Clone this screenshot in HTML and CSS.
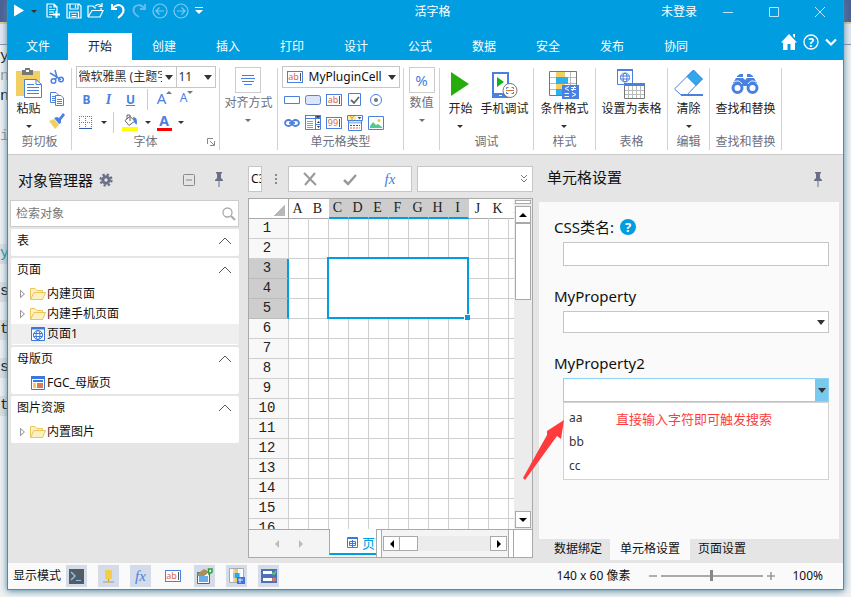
FILE: index.html
```html
<!DOCTYPE html>
<html lang="zh-CN">
<head>
<meta charset="utf-8">
<title>活字格</title>
<link rel="stylesheet" href="styles.css">
</head>
<body>
<div class="backdrop" aria-hidden="true">
  <div class="code-top"><span>y</span><span class="dim">n</span><span>n</span><span></span><span class="dim">i</span></div>
  <div class="code-low"><span class="teal">y</span><span>s</span><span>t</span><span>s</span><span>t</span></div>
</div>
<div class="window">
  <header class="titlebar">
    <div class="quick">
      <button aria-label="运行"><svg width="12" height="16" viewBox="0 0 12 16"><path d="M1 1.500 11 7.500 1 13.500Z" fill="#fff"/></svg></button>
      <button class="q-caret" aria-label="运行选项"><i class="caret"></i></button>
      <button aria-label="新建"><svg width="16" height="16" viewBox="0 0 16 16" fill="none" stroke="#fff" stroke-width="1.200"><path d="M7 14H2V1H9L12 4V8M9 1V4H12M4 4H7M4 6.500H10M4 9H9M4 11.500H8"/><path d="M11.500 8V15M8 11.500H15" stroke-width="2"/></svg></button>
      <button aria-label="保存"><svg width="16" height="16" viewBox="0 0 16 16" fill="none" stroke="#fff" stroke-width="1.200"><path d="M1 1H13L15 3V15H1ZM4 1V6H12V1M9.500 2V5M3.500 15V9H12.500V15M5.500 11.500H10.500M5.500 13.500H10.500"/></svg></button>
      <button aria-label="打开"><svg width="18" height="16" viewBox="0 0 18 16" fill="none" stroke="#fff" stroke-width="1.200"><path d="M1 14V3H6L8 5H9M1 14 5 7.500H16L13 14H1M14 7V5M8 3C10 1 13 1 15 3M15 0V3.500H11.500"/></svg></button>
      <button aria-label="撤销"><svg width="16" height="16" viewBox="0 0 16 16" fill="none" stroke="#fff" stroke-width="2"><path d="M2 1V6H7M2.500 5.500C5 2 9 1 12 3.500C15.500 7 13 11.500 8 15"/></svg></button>
      <button aria-label="重做"><svg width="16" height="16" viewBox="0 0 16 16" fill="none" stroke="#6bb9ec" stroke-width="1.800"><path d="M14 1V6H9M13.500 5.500C11 2 7 1 4 3.500C.5 7 3 11.500 8 14"/></svg></button>
      <button aria-label="后退"><svg width="16" height="16" viewBox="0 0 16 16" fill="none" stroke="#7fc8f0" stroke-width="1.200"><circle cx="8" cy="8" r="7"/><path d="M12 8H4M7.500 4.500 4 8 7.500 11.500"/></svg></button>
      <button aria-label="前进"><svg width="16" height="16" viewBox="0 0 16 16" fill="none" stroke="#7fc8f0" stroke-width="1.200"><circle cx="8" cy="8" r="7"/><path d="M4 8H12M8.500 4.500 12 8 8.500 11.500"/></svg></button>
      <button aria-label="自定义"><svg width="10" height="10" viewBox="0 0 10 10" fill="#fff"><path d="M1 1H9V2H1ZM1 4H9L5 8Z"/></svg></button>
    </div>
    <h1>活字格</h1>
    <div class="sysmenu">
      <button class="login">未登录</button>
      <button aria-label="最小化"><svg width="12" height="12" viewBox="0 0 12 12" stroke="#bfe6fa"><path d="M1 6.500H11"/></svg></button>
      <button aria-label="最大化"><svg width="12" height="12" viewBox="0 0 12 12" fill="none" stroke="#bfe6fa"><path d="M1.500 1.500H10.500V10.500H1.500Z"/></svg></button>
      <button aria-label="关闭"><svg width="12" height="12" viewBox="0 0 12 12" stroke="#bfe6fa"><path d="M1 1 11 11M11 1 1 11"/></svg></button>
    </div>
  </header>

  <nav class="tabs">
    <a class="file" href="#file">文件</a><a class="on" href="#home">开始</a><a href="#create">创建</a><a href="#insert">插入</a><a href="#print">打印</a><a href="#design">设计</a><a href="#formula">公式</a><a href="#data">数据</a><a href="#safe">安全</a><a href="#publish">发布</a><a href="#team">协同</a>
    <div class="tab-tools">
      <button aria-label="主页"><svg width="18" height="18" viewBox="0 0 18 18" fill="#fff"><path d="M9 1 17 9.500H15V17H10.500V11H7.500V17H3V9.500H1ZM13 1H15V5L13 3Z"/></svg></button>
      <button aria-label="帮助"><svg width="18" height="18" viewBox="0 0 18 18"><circle cx="9" cy="9" r="7" fill="none" stroke="#fff" stroke-width="1.300"/><text x="9" y="13.500" text-anchor="middle" font-size="12" font-weight="700" fill="#fff">?</text></svg></button>
      <button aria-label="折叠功能区"><svg width="14" height="18" viewBox="0 0 14 18" fill="none" stroke="#fff" stroke-width="2.200"><path d="M2 6.500 7 11.500 12 6.500"/></svg></button>
    </div>
  </nav>

  <section class="ribbon">
    <div class="group g-clip">
      <div class="body">
        <button class="big"><svg width="28" height="32" viewBox="0 0 28 32"><path d="M1 4H25V29H1Z" fill="#f2cf63"/><path d="M7 3H10V1H15V3H18V8H7Z" fill="#777"/><path d="M11 3H14V5H11Z" fill="#fff"/><path d="M9.500 12.500H21L26.500 17.500V30.500H9.500Z" fill="#fff" stroke="#4a80e0"/><path d="M21 12.500V17.500H26.500M12 17.500H19M12 20.500H24M12 23.500H24M12 26.500H24" fill="none" stroke="#4a80e0"/></svg><span>粘贴</span><i class="caret"></i></button>
        <div class="stack">
          <button aria-label="剪切"><svg width="16" height="16" viewBox="0 0 16 16" fill="none" stroke="#4a80e0" stroke-width="1.500"><path d="M6 1 8 8 12 11M1 4 8 8 6 11"/><circle cx="4.500" cy="12" r="2.300"/><circle cx="12" cy="10.500" r="2.300"/></svg></button>
          <button aria-label="复制"><svg width="16" height="16" viewBox="0 0 16 16" fill="#fff" stroke="#4a80e0"><path d="M1.500 1.500H7L9.500 4V11.500H1.500ZM3 5.500H7M3 7.500H7M3 9.500H7"/><path d="M6.500 4.500H12L14.500 7V14.500H6.500ZM8 8.500H13M8 10.500H13M8 12.500H13"/></svg></button>
          <button aria-label="格式刷"><svg width="16" height="16" viewBox="0 0 16 16"><path d="M0 8 5 6 10 12 6 16Z" fill="#f2cf63"/><path d="M5 5 8 4 10 5 14 0 16 2 12 7 12 10 10 11Z" fill="#4a80e0"/></svg></button>
        </div>
      </div>
      <h2>剪切板</h2>
    </div><i class="sep"></i>
    <div class="group g-font">
      <div class="body col">
        <div class="row joined">
          <label class="pick font-name"><select aria-label="字体"><option>微软雅黑 (主题字体)</option></select></label>
          <label class="pick font-size"><select aria-label="字号"><option>11</option></select></label>
        </div>
        <div class="row text-row">
          <button class="b">B</button><button class="i">I</button><button class="u">U</button><i class="mini-sep"></i>
          <button class="grow" aria-label="增大字号">A<svg width="6" height="6" viewBox="0 0 6 6"><path d="M0 4 3 1 6 4Z" fill="#777"/></svg></button>
          <button class="shrink" aria-label="减小字号">A<svg width="6" height="6" viewBox="0 0 6 6"><path d="M0 1 3 4 6 1Z" fill="#777"/></svg></button>
        </div>
        <div class="row fill-row">
          <button class="borders" aria-label="边框"><svg width="14" height="14" viewBox="0 0 14 14" fill="none" stroke="#777"><path d="M.5 0V13M6.500 0V13M12.500 0V13M0 .5H13M0 6.500H13" stroke-dasharray="1 1"/><path d="M0 12.500H13" stroke="#2f5bb0"/></svg></button><i class="caret"></i><i class="mini-sep"></i>
          <button aria-label="填充颜色"><svg width="17" height="17" viewBox="0 0 17 17"><path d="M3 6.500 8 2.500 13 7 7 11.500Z" fill="#fff" stroke="#666"/><path d="M5 5V1H8V7" fill="none" stroke="#666"/><path d="M11 3C15 3 15.500 7 14.500 11L12 8Z" fill="#4a80e0"/><path d="M0 13H16V17H0Z" fill="#ff0"/></svg></button><i class="caret"></i>
          <button class="color" aria-label="字体颜色">A</button><i class="caret"></i>
        </div>
      </div>
      <h2>字体</h2>
      <button class="launcher" aria-label="字体设置"><svg width="8" height="8" viewBox="0 0 8 8" fill="none" stroke="#888"><path d="M.5 6V.5H6M3 3 7 7M7.500 3V7.500H3"/></svg></button>
    </div><i class="sep"></i>
    <div class="group g-align">
      <button class="boxed"><span class="frame"><svg width="14" height="12" viewBox="0 0 14 12" stroke="#4a80e0"><path d="M1 1.500H13" stroke="#777"/><path d="M0 4.500H14M1 7.500H13M3 10.500H11"/></svg></span><span>对齐方式</span><i class="caret"></i></button>
    </div><i class="sep"></i>
    <div class="group g-cell">
      <div class="body col">
        <label class="pick cell-type"><span class="abl">ab<b></b></span><select aria-label="单元格类型"><option>MyPluginCell</option></select></label>
        <div class="cells">
          <button aria-label="文本"><svg width="16" height="14" viewBox="0 0 16 14"><path d="M.5 3.500H15.500V10.500H.5Z" fill="#fff" stroke="#4a80e0"/></svg></button>
          <button aria-label="按钮"><svg width="16" height="14" viewBox="0 0 16 14"><rect x=".5" y="2.500" width="15" height="9" rx="2" fill="#dbe6fb" stroke="#5e83c4"/></svg></button>
          <button aria-label="文本框"><span class="abl">ab<b></b></span></button>
          <button aria-label="复选框"><svg width="14" height="14" viewBox="0 0 14 14"><path d="M.5 .5H12.500V12.500H.5Z" fill="#fff" stroke="#4a80e0"/><path d="M3 7 6 10 11 4" fill="none" stroke="#666" stroke-width="1.800"/></svg></button>
          <button aria-label="单选"><svg width="14" height="14" viewBox="0 0 14 14"><circle cx="7" cy="7" r="5.500" fill="#fff" stroke="#4a80e0"/><circle cx="7" cy="7" r="2" fill="#777"/></svg></button>
          <button aria-label="超链接"><svg width="16" height="14" viewBox="0 0 16 14" fill="none" stroke="#4a80e0" stroke-width="1.800"><ellipse cx="4.500" cy="7" rx="3.500" ry="3"/><ellipse cx="11.500" cy="7" rx="3.500" ry="3"/><path d="M5 7H11"/></svg></button>
          <button aria-label="列表"><svg width="16" height="16" viewBox="0 0 16 16"><path d="M.5 .5H15.500V14.500H.5Z" fill="#fff" stroke="#4a80e0"/><path d="M0 0H16V4H0Z" fill="#4a80e0"/><path d="M1 1H10V3H1Z" fill="#fff"/><path d="M2 6.500H8M2 8.500H8M2 10.500H8M2 12.500H8" stroke="#999"/><path d="M10.500 4V15M10 9.500H15" stroke="#4a80e0"/><path d="M11 1H15L13 3ZM12 8H15L13.500 6ZM12 11H15L13.500 13Z" fill="#333"/></svg></button>
          <button aria-label="数字"><span class="abl">99<b></b></span></button>
          <button aria-label="日期"><svg width="16" height="16" viewBox="0 0 16 16"><path d="M.5 .5H15.500V5.500H.5Z" fill="#fff" stroke="#4a80e0"/><path d="M1 1H9V5H1Z" fill="#f6e9a8"/><path d="M3 1 5 3 7 1M5 3V5" stroke="#d9a520" fill="none"/><path d="M10.500 2H14.500L12.500 4.500Z" fill="#555"/><path d="M1.500 6V15.500H14.500V6" fill="#fff" stroke="#4a80e0"/><path d="M2 7.500H14" stroke="#9dbcf0" stroke-width="2"/><path d="M3 10.500H13" stroke="#555" stroke-dasharray="2 1"/><path d="M3 13H13" stroke="#e07048" stroke-dasharray="2 1"/></svg></button>
          <button aria-label="图片"><svg width="16" height="16" viewBox="0 0 16 16"><path d="M.5 1.500H15.500V14.500H.5Z" fill="#fff" stroke="#4a80e0"/><path d="M2 13V11L5 7 8 10 10 9 14 12V13Z" fill="#55c795"/><circle cx="11" cy="5.500" r="1.600" fill="#f1c84c"/></svg></button>
        </div>
      </div>
      <h2>单元格类型</h2>
    </div><i class="sep"></i>
    <div class="group g-num">
      <button class="boxed"><span class="frame pct">%</span><span>数值</span><i class="caret"></i></button>
    </div><i class="sep"></i>
    <div class="group g-debug">
      <div class="body">
        <button class="big"><svg width="20" height="32" viewBox="0 0 20 32"><path d="M1 5V29L19 17Z" fill="#27ad0b"/></svg><span>开始</span><i class="caret"></i></button>
        <button class="big"><svg width="26" height="32" viewBox="0 0 26 32"><path d="M1 6H16V29H1Z" fill="#fff" stroke="#4a80e0" stroke-width="2"/><path d="M0 26H17V31H0Z" fill="#4a80e0"/><path d="M7 28.500H10" stroke="#fff"/><path d="M5 10V20L12 15Z" fill="#12b312"/><circle cx="18" cy="23.500" r="7" fill="#fff" stroke="#777"/><path d="M14.500 22V20.500H16.500M19.500 20.500H21.500V22M14.500 25V26.500H16.500M19.500 26.500H21.500V25" fill="none" stroke="#4a80e0"/><path d="M14 23.500H22" stroke="#e07030"/></svg><span>手机调试</span></button>
      </div>
      <h2>调试</h2>
    </div><i class="sep"></i>
    <div class="group g-style">
      <div class="body"><button class="big"><svg width="30" height="32" viewBox="0 0 30 32"><path d="M.5 4.500H27.500V28.500H.5Z" fill="#fff" stroke="#777"/><path d="M7.500 5V28M21.500 5V28M1 10.500H27M1 16.500H27M1 22.500H27" stroke="#bbb"/><path d="M7 5H16V10H7ZM7 17H16V22H7Z" fill="#f2cf63"/><path d="M7 10H19V17H7ZM7 22H13V28H7Z" fill="#2fb0ee"/><path d="M13 18H30V32H13Z" fill="#4a80e0"/><path d="M20 19.500 16 21.500 20 23.500M15.500 26.500H20M15.500 29.500H20M22 20.500H27M22 22.500H27M26 19 23 24M23 25.500 27 27.500 23 29.500" fill="none" stroke="#fff"/></svg><span>条件格式</span><i class="caret"></i></button></div>
      <h2>样式</h2>
    </div><i class="sep"></i>
    <div class="group g-table">
      <div class="body"><button class="big"><svg width="28" height="32" viewBox="0 0 28 32" fill="none"><path d="M.5 2.500H15.500V17.500H.5Z" fill="#fff" stroke="#4a80e0"/><path d="M0 2H16V4H0Z" fill="#4a80e0"/><circle cx="8" cy="10.500" r="4.500" stroke="#4a80e0"/><ellipse cx="8" cy="10.500" rx="2" ry="4.500" stroke="#4a80e0"/><path d="M3.500 9H12.500M3.500 12H12.500" stroke="#4a80e0"/><path d="M7.500 16.500H27.500V31.500H7.500Z" fill="#fff" stroke="#777"/><path d="M7 16H28V19H7Z" fill="#4a80e0"/><path d="M11.500 19V31M15.500 19V31M19.500 19V31M23.500 19V31M8 23.500H27M8 27.500H27" stroke="#bbb"/></svg><span>设置为表格</span></button></div>
      <h2>表格</h2>
    </div><i class="sep"></i>
    <div class="group g-edit">
      <div class="body"><button class="big"><svg width="30" height="32" viewBox="0 0 30 32"><path d="M1 21.500 19 3.500 28 12 13 28H7L1 22.500Z" fill="#fff" stroke="#4a80e0"/><path d="M13 9.500 19.500 3 28.500 12 22 18.500Z" fill="#2fa9ea" stroke="#4a80e0"/><path d="M7 28H29" stroke="#4a80e0" stroke-width="2"/></svg><span>清除</span><i class="caret"></i></button></div>
      <h2>编辑</h2>
    </div><i class="sep"></i>
    <div class="group g-find">
      <div class="body"><button class="big"><svg width="28" height="32" viewBox="0 0 28 32"><g fill="none" stroke="#4a80e0" stroke-width="3"><circle cx="6.500" cy="21" r="4.500"/><circle cx="21.500" cy="21" r="4.500"/></g><path d="M6 9 9 7H12V10H6ZM16 7H19L22 9V10H16ZM5 11H12L14 13 16 11H23L26 16H19L17 19H11L9 16H2Z" fill="#4a80e0"/><path d="M3 15C7 13 9 14 11 17M25 15C21 13 19 14 17 17M4 10.500H24" stroke="#fff" fill="none"/></svg><span>查找和替换</span></button></div>
      <h2>查找和替换</h2>
    </div><i class="sep"></i>
  </section>

  <main class="work">
    <aside class="objects">
      <div class="pane-head">
        <h3>对象管理器</h3>
        <button aria-label="设置"><svg width="14" height="14" viewBox="0 0 14 14" fill="none" stroke="#6b7088"><circle cx="7" cy="7" r="3.200" stroke-width="3"/><circle cx="7" cy="7" r="5.500" stroke-width="2.200" stroke-dasharray="2.300 2.020"/></svg></button>
        <span class="spring"></span>
        <button aria-label="全部折叠"><svg width="14" height="14" viewBox="0 0 14 14" fill="none" stroke="#888"><rect x="1.500" y="1.500" width="11" height="11" rx="1"/><path d="M4 7H10"/></svg></button>
        <button class="pin" aria-label="固定"><svg width="10" height="16" viewBox="0 0 10 16" fill="#6b7088"><path d="M2 0H8V1L7 2V6L9 8V9H1V8L3 6V2L2 1ZM4.500 9H5.500V15H4.500Z"/></svg></button>
      </div>
      <label class="search"><input type="search" aria-label="检索对象" placeholder="检索对象"><svg width="14" height="14" viewBox="0 0 14 14" fill="none" stroke="#aaa"><circle cx="5.500" cy="5.500" r="4.500" stroke-width="1.300"/><path d="M9 9 13 13" stroke-width="2.200"/></svg></label>
      <section class="tree"><button class="tree-head">表<svg width="14" height="8" viewBox="0 0 14 8" fill="none" stroke="#555"><path d="M1 7 7 1 13 7"/></svg></button></section>
      <section class="tree"><button class="tree-head">页面<svg width="14" height="8" viewBox="0 0 14 8" fill="none" stroke="#555"><path d="M1 7 7 1 13 7"/></svg></button>
        <ul>
          <li><i class="tri"></i><svg width="16" height="14" viewBox="0 0 16 14" fill="#fdf0c0" stroke="#ecc65c"><path d="M.5 12.500V1.500H5L7 3.500H12.500V5.500H15.500L12.500 12.500ZM.5 12.500 4 5.500H13"/></svg><a href="#p1">内建页面</a></li>
          <li><i class="tri"></i><svg width="16" height="14" viewBox="0 0 16 14" fill="#fdf0c0" stroke="#ecc65c"><path d="M.5 12.500V1.500H5L7 3.500H12.500V5.500H15.500L12.500 12.500ZM.5 12.500 4 5.500H13"/></svg><a href="#p2">内建手机页面</a></li>
          <li class="on"><i class="tri none"></i><svg width="16" height="14" viewBox="0 0 16 14" fill="none" stroke="#3c78dc"><path d="M1.500 .5H14.500V13.500H1.500Z" fill="#fff"/><path d="M1 1.500H15" stroke-width="2"/><circle cx="8" cy="8" r="4.500"/><ellipse cx="8" cy="8" rx="2" ry="4.500"/><path d="M3.500 6.500H12.500M3.500 9.500H12.500"/></svg><a href="#p3">页面1</a></li>
        </ul></section>
      <section class="tree"><button class="tree-head">母版页<svg width="14" height="8" viewBox="0 0 14 8" fill="none" stroke="#555"><path d="M1 7 7 1 13 7"/></svg></button>
        <ul>
          <li><i class="tri none"></i><svg width="16" height="14" viewBox="0 0 16 14"><path d="M1.500 .5H14.500V13.500H1.500Z" fill="#fff" stroke="#3c78dc"/><path d="M1 0H15V3H1ZM3 4H13V6H3Z" fill="#3c78dc"/><path d="M3 7H6V12H3Z" fill="#f0cc5c"/><path d="M7 7H13V12H7Z" fill="#e07850"/></svg><a href="#m1">FGC_母版页</a></li>
        </ul></section>
      <section class="tree"><button class="tree-head">图片资源<svg width="14" height="8" viewBox="0 0 14 8" fill="none" stroke="#555"><path d="M1 7 7 1 13 7"/></svg></button>
        <ul>
          <li><i class="tri"></i><svg width="16" height="14" viewBox="0 0 16 14" fill="#fdf0c0" stroke="#ecc65c"><path d="M.5 12.500V1.500H5L7 3.500H12.500V5.500H15.500L12.500 12.500ZM.5 12.500 4 5.500H13"/></svg><a href="#i1">内置图片</a></li>
        </ul></section>
    </aside>

    <section class="editor">
      <div class="formula">
        <input class="ref" aria-label="名称框" value="C3">
        <i class="dots"></i>
        <div class="fx-tools">
          <button aria-label="取消"><svg width="14" height="14" viewBox="0 0 14 14" fill="none" stroke="#999" stroke-width="2"><path d="M1 1 13 13M12 1 2 13"/></svg></button>
          <button aria-label="确认"><svg width="14" height="14" viewBox="0 0 14 14" fill="none" stroke="#999" stroke-width="2.500"><path d="M1 8 5 12 13 3"/></svg></button>
          <button class="fx" aria-label="函数">fx</button>
        </div>
        <label class="expr"><input aria-label="公式"><svg width="8" height="8" viewBox="0 0 8 8" fill="none" stroke="#777"><path d="M1 0 4 3 7 0M1 4 4 7 7 4"/></svg></label>
      </div>
      <div class="sheet">
        <div class="view">
          <table id="grid"></table>
          <div class="selection"><i></i></div>
        </div>
        <div class="vscroll"><i class="split"></i><button aria-label="向上"><i class="up"></i></button><i class="thumb"></i><span class="spring"></span><button aria-label="向下"><i class="down"></i></button></div>
        <div class="foot">
          <div class="nav"><button aria-label="上一页"><i class="left"></i></button><button aria-label="下一页"><i class="right"></i></button></div>
          <button class="page-tab"><svg width="11" height="11" viewBox="0 0 11 11" fill="none" stroke="#3c78dc"><path d="M.5 .5H10.500V10.500H.5ZM0 1.500H11M2.500 4.500H8.500V8.500H2.500ZM5.500 3V10M2 6.500H9"/></svg>页面1</button>
          <i class="grip"></i>
          <div class="hscroll"><button aria-label="向左"><i class="left"></i></button><i class="hthumb"></i><span class="spring"></span><button aria-label="向右"><i class="right"></i></button></div>
          <i class="grip"></i>
          <div class="corner"></div>
        </div>
      </div>
    </section>

    <aside class="props">
      <div class="pane-head">
        <h3>单元格设置</h3><span class="spring"></span>
        <button class="pin" aria-label="固定"><svg width="10" height="16" viewBox="0 0 10 16" fill="#6b7088"><path d="M2 0H8V1L7 2V6L9 8V9H1V8L3 6V2L2 1ZM4.500 9H5.500V15H4.500Z"/></svg></button>
      </div>
      <form class="fields">
        <div class="label"><label for="css">CSS类名:</label><span class="q">?</span></div>
        <input id="css" class="box">
        <div class="label"><label for="prop1">MyProperty</label></div>
        <div class="pick box short"><select id="prop1"><option></option></select></div>
        <div class="label"><label for="prop2">MyProperty2</label></div>
        <div class="combo"><input id="prop2" role="combobox" aria-expanded="true" aria-controls="options"><button type="button" aria-label="展开"><i class="caret"></i></button></div>
        <div class="options">
          <ul id="options" role="listbox"><li role="option">aa</li><li role="option">bb</li><li role="option">cc</li></ul>
          <p class="note">直接输入字符即可触发搜索</p>
          <svg class="arrow" width="42" height="62" viewBox="0 0 42 62"><path d="M1 60 25 17 25 13 42 2 39 21 35 18 3 62Z" fill="#ff3b3b"/></svg>
        </div>
      </form>
      <nav class="prop-tabs"><a href="#bind">数据绑定</a><a class="on" href="#cell">单元格设置</a><a href="#page">页面设置</a></nav>
    </aside>
  </main>

  <footer class="status">
    <span class="mode">显示模式</span>
    <button class="tile" aria-label="命令"><svg width="15" height="15" viewBox="0 0 15 15" fill="none"><path d="M0 0H15V15H0Z" fill="#555b60"/><path d="M2 3 6 7 2 11" stroke="#7cc4f5" stroke-width="1.500"/><path d="M7 11.500H12" stroke="#7cc4f5"/></svg></button>
    <button class="tile" aria-label="数据"><svg width="15" height="15" viewBox="0 0 15 15"><rect x="4" y="1" width="7" height="9" rx="1" fill="#f3cc4a"/><path d="M7.500 10V13M2 13H13" stroke="#999"/><path d="M6 11.500H9V14H6Z" fill="#edbd36"/></svg></button>
    <button class="tile fx" aria-label="公式">fx</button>
    <button class="tile plain" aria-label="文本"><span class="abl">ab<b></b></span></button>
    <button class="tile" aria-label="属性"><svg width="16" height="16" viewBox="0 0 16 16"><path d="M.5 4.500H12.500V15.500H.5Z" fill="#fff" stroke="#286cae"/><path d="M2 8H11V14H2Z" fill="#69aeea"/><path d="M0 6 7 1 11 3 10 6 7 8H1Z" fill="#a89058"/><path d="M11.500 1H15V4L12 6Z" fill="#fff" stroke="#2f9b36" stroke-width="1.500"/></svg></button>
    <button class="tile" aria-label="条件格式"><svg width="16" height="16" viewBox="0 0 16 16"><path d="M.5 .5H14.500V14.500H.5Z" fill="#fff" stroke="#aaa"/><path d="M4 1H9V5H4ZM4 10H8V14H4Z" fill="#f0c85a"/><path d="M4 5H11V10H4Z" fill="#28aaea"/><path d="M8 9H16V16H8Z" fill="#3c74dc"/><path d="M9 12H14M11 10V15M5 1V14M11 1V9" stroke="#ddeaff"/></svg></button>
    <button class="tile" aria-label="列表"><svg width="16" height="14" viewBox="0 0 16 14"><path d="M0 0H16V14H0Z" fill="#4d70b8"/><path d="M2 2H11V5H2ZM2 9H11V12H2Z" fill="#fff"/><path d="M11 4 13 5 15 2" stroke="#58c274" stroke-width="2" fill="none"/><circle cx="13" cy="10.500" r="2" fill="#e07a5a"/></svg></button>
    <span class="spring"></span>
    <span class="size">140 x 60 像素</span>
    <button class="zoom" aria-label="缩小"><svg width="10" height="10" viewBox="0 0 10 10" stroke="#999" stroke-width="1.500"><path d="M1 5H9"/></svg></button>
    <input class="slider" type="range" min="0" max="100" value="49" aria-label="缩放">
    <button class="zoom" aria-label="放大"><svg width="10" height="10" viewBox="0 0 10 10" stroke="#999" stroke-width="1.500"><path d="M1 5H9M5 1V9"/></svg></button>
    <span class="percent">100%</span>
  </footer>
</div>
<script src="script.js"></script>
</body>
</html>
```
FILE: styles.css
```css
* { box-sizing: border-box; }
html, body { margin: 0; height: 100%; }
body {
  font: 12px/16px "Noto Sans", "Noto Sans CJK SC", sans-serif;
  color: #111;
  overflow: hidden;
}
h1, h2, h3, p, ul { margin: 0; padding: 0; font-weight: 400; }
ul { list-style: none; }
a { color: inherit; text-decoration: none; }
button, input, select { font: inherit; color: inherit; margin: 0; padding: 0; border: 0; background: none; outline: 0; border-radius: 0; }
button { display: inline-flex; align-items: center; justify-content: center; }
svg { flex: none; display: block; }
.spring { flex: 1; }
.caret { flex: none; width: 0; height: 0; border: 3px solid transparent; border-top-color: #333; border-bottom: 0; }

/* editor seen behind the window */
.backdrop { position: absolute; inset: 0; background: linear-gradient(#4d6093 0 22px, #e8c98a 22px 24px, #e5e9f1 24px 44px, #8790ad 44px 45px, #f1f1f1 45px); font: 15px/20px "Liberation Mono", monospace; overflow: hidden; }
.backdrop span { display: block; height: 20px; width: 9px; }
.backdrop .dim { color: #999; }
.backdrop .teal { color: #2b91af; }
.code-top { padding-top: 47px; height: 244px; }
.code-low { display: flex; flex-direction: column; gap: 18px; }
.code-low span { background: #dfe1e3; }

.window { position: relative; height: calc(100% - 7px); margin: 0 7px; border: 1px solid #1c9bd4; border-top: 0; background: #e5e5e5; box-shadow: 0 1px 7px #4b86a5; display: flex; flex-direction: column; }

.titlebar { display: flex; height: 24px; background: #009de1; color: #fff; }
.titlebar h1 { flex: 1; text-align: center; font-size: 12px; line-height: 23px; }
.quick { display: flex; gap: 5px; padding-left: 5px; align-items: center; height: 22px; }
.quick .q-caret { width: 8px; margin-right: 2px; }
.sysmenu { display: flex; }
.sysmenu button { width: 46px; height: 24px; }
.sysmenu .login { width: 36px; margin-right: 8px; }

.tabs { display: flex; height: 36px; padding-top: 9px; background: #009de1; color: #fff; }
.tabs a { width: 64px; text-align: center; line-height: 27px; }
.tabs .file { width: 60px; }
.tabs .on { background: #fff; color: #222; }
.tab-tools { display: flex; gap: 4px; margin-left: auto; padding-right: 5px; height: 18px; }

.ribbon { display: flex; height: 95px; padding: 6px 0 4px; background: #fff; border-bottom: 1px solid #ccc; }
.sep { flex: none; width: 1px; margin-top: 2px; background: #d2d2d2; }
.group { flex: none; position: relative; display: flex; flex-direction: column; align-items: center; }
.group h2 { margin-top: auto; font-size: 12px; line-height: 16px; color: #6b7080; }
.body { display: flex; }
.body.col { flex-direction: column; }
.g-clip { width: 63px; }
.g-font { width: 147px; }
.g-align { width: 57px; }
.g-cell { width: 125px; }
.g-num { width: 35px; }
.g-debug { width: 93px; }
.g-style { width: 61px; }
.g-table { width: 71px; }
.g-edit { width: 41px; }
.g-find { width: 71px; }
.big { flex-direction: column; justify-content: flex-start; color: #222; height: 66px; padding-top: 1px; white-space: nowrap; }
.big span { line-height: 20px; }
.big .caret { margin-top: 6px; }
.g-clip .big { margin-right: 6px; }
.g-debug .body { gap: 8px; padding-left: 4px; }
.stack { display: flex; flex-direction: column; }
.stack button { height: 22px; }
.boxed { flex-direction: column; color: #6b7080; white-space: nowrap; padding-top: 1px; }
.boxed .frame { display: flex; align-items: center; justify-content: center; width: 26px; height: 26px; border: 1px solid #ccc; line-height: 20px; }
.boxed span { line-height: 20px; }
.boxed .caret { margin-top: 6px; border-top-color: #6b7080; }
.boxed .pct { color: #4a80e0; font-size: 15px; }

.pick { position: relative; display: flex; align-items: center; height: 22px; border: 1px solid #c6c6c6; background: #fff; }
.pick::after { content: ""; position: absolute; right: 3px; top: 8px; border: 4px solid transparent; border-top: 5px solid #333; border-bottom: 0; pointer-events: none; }
.pick select { appearance: none; width: 100%; height: 20px; padding: 0 14px 0 2px; }
.font-name { width: 101px; }
.font-size { width: 40px; margin-left: -1px; }
.cell-type { width: 118px; padding-left: 4px; }
.cell-type select { padding-left: 6px; }

.row { display: flex; align-items: center; height: 23px; color: #4a80e0; }
.row.joined { height: 22px; color: #333; }
.mini-sep { width: 1px; height: 21px; background: #ccc; }
.text-row button { width: 22px; height: 20px; font-weight: 700; font-size: 12px; }
.text-row .i { font-style: italic; font-family: "Liberation Serif", serif; font-size: 14px; }
.text-row .u { text-decoration: underline; }
.text-row .mini-sep { margin: 0 6px 0 5px; }
.text-row .grow, .text-row .shrink { font-weight: 400; align-items: flex-start; }
.text-row .grow { font-size: 15px; }
.fill-row { gap: 6px; padding-left: 3px; }
.fill-row .borders { margin-right: 2px; }
.fill-row .mini-sep { margin-right: 2px; }
.fill-row .color { width: 15px; height: 17px; line-height: 14px; font-size: 14px; font-weight: 700; border-bottom: 3px solid red; }
.launcher { position: absolute; right: 4px; bottom: 4px; }
.cells { display: grid; grid-template-columns: repeat(5, 21px); grid-auto-rows: 23px; }
.abl { flex: none; display: flex; align-items: center; justify-content: center; width: 16px; height: 12px; border: 1px solid #4a80e0; background: #fff; color: #d96845; font-size: 9px; line-height: 10px; }
.abl b { width: 1px; height: 8px; margin-left: 1px; background: #555; }

.work { flex: 1; min-height: 0; display: flex; padding-right: 4px; }
.pane-head { display: flex; align-items: center; height: 45px; }
.pane-head h3 { font-size: 15px; line-height: 20px; }
.objects { flex: none; width: 232px; margin-right: 8px; padding: 2px 1px 0 3px; }
.objects .pane-head { height: 43px; padding: 3px 15px 0 7px; gap: 6px; }
.objects .pin { margin-left: 12px; }
.search { display: flex; align-items: center; height: 27px; margin: 0 0 2px -1px; padding: 0 2px 0 5px; background: #fff; border: 1px solid #ccc; }
.search input { flex: 1; min-width: 0; appearance: none; }
.search input::placeholder { color: #777; opacity: 1; }
.tree { background: #fff; border-radius: 2px; padding-bottom: 1px; margin-bottom: 2px; }
.tree-head { display: flex; width: 100%; height: 26px; padding: 0 7px 2px 6px; justify-content: space-between; }
.tree li { display: flex; align-items: center; height: 20px; padding-left: 9px; }
.tree li.on { background: #efefef; }
.tree a { margin-left: 1px; }
.tri { width: 5px; height: 9px; margin-right: 5px; background: #999; clip-path: polygon(0 0, 100% 50%, 0 100%, 0 80%, 20% 75%, 75% 50%, 20% 22%, 20% 75%, 0 80%); }
.tri.none { visibility: hidden; }

.editor { flex: 1; min-width: 0; display: flex; flex-direction: column; padding: 11px 0 5px; }
.formula { display: flex; height: 26px; margin-bottom: 6px; }
.ref { flex: none; width: 14px; border: 1px solid #c6c6c6; padding-left: 2px; background: #fff; }
.dots { flex: none; align-self: center; width: 2px; height: 10px; margin: 0 11px 0 13px; background: repeating-linear-gradient(#888 0 2px, transparent 2px 4px); }
.fx-tools { flex: none; display: flex; width: 124px; padding: 0 1px; border: 1px solid #c6c6c6; background: #fff; }
.fx-tools button { flex: 1; }
.fx { color: #4a80e0; font: italic 15px/18px "Liberation Serif", serif; }
.expr { flex: 1; min-width: 0; display: flex; align-items: center; margin-left: 5px; padding-right: 4px; border: 1px solid #c6c6c6; background: #fff; }
.expr input { flex: 1; min-width: 0; }
.sheet { flex: 1; min-height: 0; display: grid; grid-template: minmax(0, 1fr) 28px / minmax(0, 1fr) 18px; border: 1px solid #a9a9a9; background: #fff; }
.view { position: relative; overflow: hidden; }
#grid { border-collapse: separate; border-spacing: 0; table-layout: fixed; width: 560px; }
#grid th, #grid td { width: 20px; height: 20px; padding: 0; border: solid #cfcfcf; border-width: 0 1px 1px 0; font: 14px/19px "Liberation Serif", serif; color: #222; }
#grid thead th { padding-right: 2px; border-right-color: #fff; border-bottom-color: #a9a9a9; }
#grid thead .hot { background: #cdcdcd; border-right-color: #cdcdcd; border-bottom: 2px solid #009de1; line-height: 18px; }
#grid tbody th { width: 40px; padding-right: 3px; background: #f8f8f8; font: 14px/19px "Liberation Mono", monospace; }
#grid tbody .hot { background: #cdcdcd; border-right: 2px solid #009de1; padding-right: 2px; border-bottom-color: #bbb; }
#grid thead .all { width: 40px; border-right-color: #a9a9a9; background: linear-gradient(135deg, transparent 50%, #b8b8b8 50%) 24px 5px / 12px 12px no-repeat; }
.selection { position: absolute; left: 78px; top: 58px; width: 142px; height: 62px; border: 2px solid #009de1; background: #fff; }
.selection i { position: absolute; right: -3px; bottom: -3px; width: 6px; height: 6px; background: #009de1; border: solid #fff; border-width: 1px 0 0 1px; }
.vscroll { display: flex; flex-direction: column; align-items: center; padding: 1px; background: #ececec; }
.vscroll button { width: 16px; height: 17px; border: 1px solid #a9a9a9; background: #fff; }
.split { width: 16px; height: 4px; margin-bottom: 2px; border: 1px solid #a9a9a9; background: #fff; }
.thumb { width: 16px; height: 77px; border: 1px solid #a9a9a9; background: #fff; }
.up, .down { border: 4px solid transparent; }
.up { border-top: 0; border-bottom-color: #000; }
.down { border-bottom: 0; border-top-color: #000; }
.left, .right { border: 4px solid transparent; }
.left { border-left: 0; border-right-color: #000; }
.right { border-right: 0; border-left-color: #000; }
.foot { grid-column: 1 / 3; display: flex; background: #f4f4f4; border-top: 1px solid #a9a9a9; }
.nav { display: flex; align-items: center; justify-content: center; gap: 20px; width: 80px; }
.nav .left { border-right-color: #bbb; }
.nav .right { border-left-color: #bbb; }
.page-tab { width: 47px; margin-top: -1px; padding: 3px 0 0 17px; gap: 4px; justify-content: flex-start; overflow: hidden; white-space: nowrap; font-size: 13px; background: #fff; color: #009de1; border-left: 1px solid #a9a9a9; border-bottom: 2px solid #009de1; margin-bottom: 2px; }
.grip { flex: none; width: 6px; background: #fff; border: solid #a9a9a9; border-width: 0 1px; }
.hscroll { flex: 1; display: flex; margin: 6px 1px; background: #ececec; }
.hscroll button { width: 17px; border: 1px solid #a9a9a9; background: #fff; }
.hthumb { width: 18px; border: 1px solid #a9a9a9; border-left: 0; background: #fff; }
.corner { width: 18px; background: #fff; }

.props { flex: none; width: 300px; margin-left: 6px; display: flex; flex-direction: column; }
.props .pane-head { flex: none; height: 47px; padding: 0 16px 0 8px; }
.props h3 { padding-bottom: 3px; }
.props .pin { padding-top: 3px; }
.fields { flex: 1; min-height: 0; background: #fafafa; padding: 15px 10px 0 24px; }
.label { display: flex; align-items: center; height: 20px; margin: 0 0 5px -9px; font-size: 15px; line-height: 20px; }
.q { width: 16px; height: 16px; margin-left: 6px; border-radius: 50%; background: #009de1; color: #fff; font-size: 13px; font-weight: 700; line-height: 16px; text-align: center; }
.box { display: block; width: 100%; height: 24px; margin-bottom: 20px; border: 1px solid #c6c6c6; background: #fff; }
.box.short { height: 22px; }
.combo { display: flex; height: 24px; border: 1px solid #8fd3f2; background: #fff; }
.combo input { flex: 1; min-width: 0; }
.combo button { width: 13px; background: #77c9ee; }
.combo .caret { border-width: 5px 4px 0; }
.options { position: relative; border: 1px solid #d2d2d2; background: #fff; padding: 3px 0 1px; }
.options li { height: 24px; padding-left: 5px; line-height: 24px; color: #333; }
.note { position: absolute; left: 52px; top: 6px; font-size: 13px; line-height: 20px; color: #ff3b3b; white-space: nowrap; }
.arrow { position: absolute; left: -42px; top: 15px; }
.prop-tabs { flex: none; display: flex; height: 24px; padding-left: 7px; }
.prop-tabs a { padding: 0 8px; line-height: 20px; height: 21px; }
.prop-tabs .on { min-width: 80px; text-align: center; background: #fafafa; }

.status { flex: none; display: flex; align-items: center; height: 26px; padding: 0 20px 0 5px; background: #fafafa; }
.mode { margin-right: 5px; }
.tile { width: 21px; height: 22px; margin-right: 11px; background: #d4dcea; }
.tile.plain { background: none; }
.size { margin-right: 18px; }
.zoom { width: 10px; height: 16px; }
.slider { appearance: none; width: 102px; height: 16px; margin: 0 3px; }
.slider::-webkit-slider-runnable-track { height: 2px; background: #aaa; }
.slider::-webkit-slider-thumb { appearance: none; width: 3px; height: 11px; margin-top: -5px; background: #888; }
.percent { margin-left: 16px; }
```
FILE: script.js
```js
const letters = 'ABCDEFGHIJKLMNOPQRSTUVWXYZ'.split('');
const hotColumns = 'CDEFGHI';
const head = '<thead><tr><th class="all"></th>' +
  letters.map(c => `<th${hotColumns.includes(c) ? ' class="hot"' : ''}>${c}</th>`).join('') + '</tr></thead>';
let rows = '';
for (let r = 1; r <= 40; r++) {
  rows += `<tr><th${r >= 3 && r <= 5 ? ' class="hot"' : ''}>${r}</th>` + '<td></td>'.repeat(letters.length) + '</tr>';
}
document.getElementById('grid').innerHTML = head + '<tbody>' + rows + '</tbody>';
```
